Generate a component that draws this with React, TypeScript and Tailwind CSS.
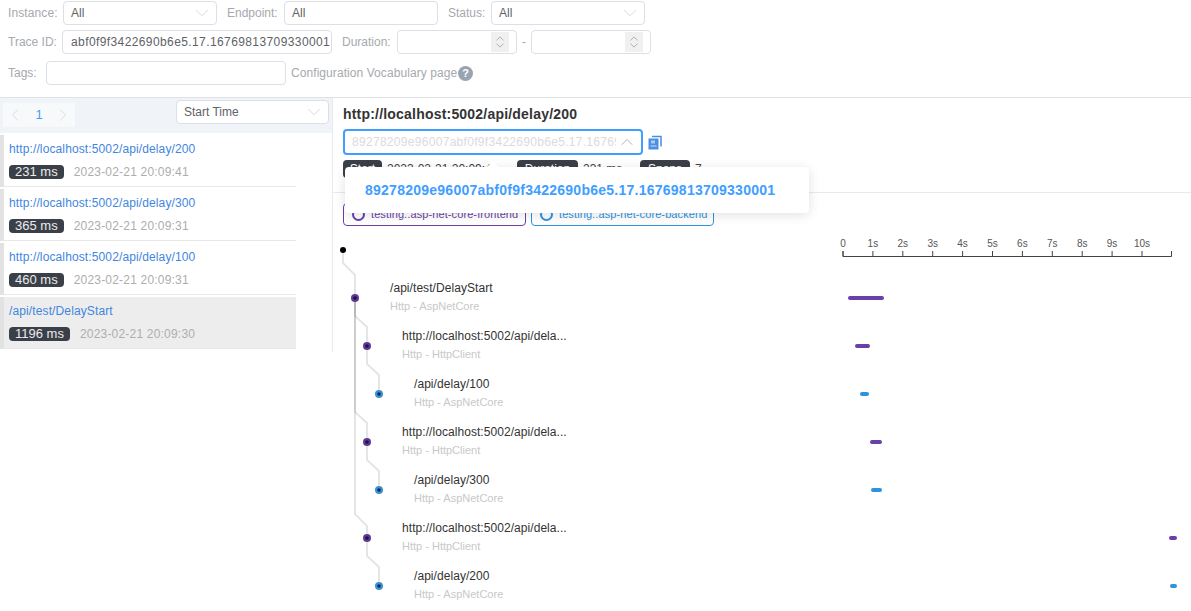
import { ChevronDown, ChevronLeft, ChevronRight, ChevronUp } from 'lucide-react';

const traces = [
    { name: 'http://localhost:5002/api/delay/200', ms: '231 ms', time: '2023-02-21 20:09:41', active: false },
    { name: 'http://localhost:5002/api/delay/300', ms: '365 ms', time: '2023-02-21 20:09:31', active: false },
    { name: 'http://localhost:5002/api/delay/100', ms: '460 ms', time: '2023-02-21 20:09:31', active: false },
    { name: '/api/test/DelayStart', ms: '1196 ms', time: '2023-02-21 20:09:30', active: true },
];

const spans = [
    { label: '/api/test/DelayStart', sub: 'Http - AspNetCore', indent: 'pl-[57px]', bar: 'ml-[5px] w-[36px] bg-[#6b3fa8]' },
    { label: 'http://localhost:5002/api/dela...', sub: 'Http - HttpClient', indent: 'pl-[69px]', bar: 'ml-[12px] w-[15px] bg-[#6b3fa8]' },
    { label: '/api/delay/100', sub: 'Http - AspNetCore', indent: 'pl-[81px]', bar: 'ml-[17px] w-[9px] bg-[#2e93dd]' },
    { label: 'http://localhost:5002/api/dela...', sub: 'Http - HttpClient', indent: 'pl-[69px]', bar: 'ml-[27px] w-[12px] bg-[#6b3fa8]' },
    { label: '/api/delay/300', sub: 'Http - AspNetCore', indent: 'pl-[81px]', bar: 'ml-[28px] w-[11px] bg-[#2e93dd]' },
    { label: 'http://localhost:5002/api/dela...', sub: 'Http - HttpClient', indent: 'pl-[69px]', bar: 'ml-[326px] w-[8px] bg-[#6b3fa8]' },
    { label: '/api/delay/200', sub: 'Http - AspNetCore', indent: 'pl-[81px]', bar: 'ml-[327px] w-[7px] bg-[#2e93dd]' },
];

// every child link starts at its parent, so the shared trunk gets darker near the top
const links = [
    'M343 250V263L355 275V298',
    'M355 298V514L367 526V538',
    'M355 298V316L367 327V346',
    'M367 346V364L379 375V394',
    'M355 298V412L367 423V442',
    'M367 442V460L379 471V490',
    'M367 538V556L379 567V586',
];

const nodes = [
    { x: 355, y: 298, fill: '#5f3a92', core: '#1d1145' },
    { x: 367, y: 346, fill: '#5f3a92', core: '#1d1145' },
    { x: 379, y: 394, fill: '#3a93cf', core: '#0a2a5e' },
    { x: 367, y: 442, fill: '#5f3a92', core: '#1d1145' },
    { x: 379, y: 490, fill: '#3a93cf', core: '#0a2a5e' },
    { x: 367, y: 538, fill: '#5f3a92', core: '#1d1145' },
    { x: 379, y: 586, fill: '#3a93cf', core: '#0a2a5e' },
];

const seconds = [0, 1, 2, 3, 4, 5, 6, 7, 8, 9, 10];

function FilterSelect({ value, className }: { value: string; className: string }) {
    return (
        <div className={`flex items-center justify-between h-6 pl-[7px] pr-[3px] bg-white border border-[#dcdfe6] rounded text-xs text-[#606266] ${className}`}>
            <span>{value}</span>
            <ChevronDown size={22} strokeWidth={0.8} className="text-[#c8ccd2]" />
        </div>
    );
}

function NumberInput() {
    return (
        <div className="flex items-center justify-end w-[120px] h-6 pr-[7px] bg-white border border-[#dcdfe6] rounded">
            <div className="flex flex-col items-center justify-center w-[18px] h-5 bg-[#f0f0f0]">
                <ChevronUp size={14} strokeWidth={1.2} className="text-[#8c8c8c] -mb-[3px]" />
                <ChevronDown size={14} strokeWidth={1.2} className="text-[#8c8c8c] -mt-[3px]" />
            </div>
        </div>
    );
}

function Filters() {
    const label = 'text-xs text-[#a6a9ad] shrink-0';
    return (
        <div className="h-[98px] pt-px pl-2 border-b border-[#dfe2e6]">
            <div className="flex items-center h-6">
                <span className={`${label} w-[55px] tracking-[0.1px]`}>Instance:</span>
                <FilterSelect value="All" className="w-[154px]" />
                <span className={`${label} ml-2.5 w-[57px]`}>Endpoint:</span>
                <div className="flex items-center w-[154px] h-6 pl-[7px] border border-[#dcdfe6] rounded text-xs text-[#606266]">All</div>
                <span className={`${label} ml-2.5 w-[43px]`}>Status:</span>
                <FilterSelect value="All" className="w-[154px]" />
            </div>
            <div className="flex items-center h-6 mt-[5px]">
                <span className={`${label} w-[54px]`}>Trace ID:</span>
                <div className="flex items-center w-[270px] h-6 pl-2 border border-[#dcdfe6] rounded text-xs tracking-[0.4px] text-[#606266] whitespace-nowrap">abf0f9f3422690b6e5.17.16769813709330001</div>
                <span className={`${label} ml-2.5 w-[55px]`}>Duration:</span>
                <NumberInput />
                <span className="w-[14px] text-center text-xs text-[#a6a9ad]">-</span>
                <NumberInput />
            </div>
            <div className="flex items-center h-6 mt-[7px]">
                <span className={`${label} w-[38px]`}>Tags:</span>
                <div className="w-[240px] h-6 border border-[#dcdfe6] rounded" />
                <span className={`${label} ml-[5px] tracking-[0.07px]`}>Configuration Vocabulary page</span>
                <span className="flex items-center justify-center w-[15px] h-[15px] ml-px rounded-full bg-[#9aa3b2] text-white text-[11px] font-bold">?</span>
            </div>
        </div>
    );
}

function TraceList() {
    return (
        <div className="w-[333px] h-[254px] shrink-0 border-r border-[#e8eaee]">
            <div className="flex items-start h-[35px] bg-[#f0f3f8]">
                <div className="flex items-center justify-between w-[72px] h-6 mt-[5px] ml-[3px] px-[2px] bg-[#f8f9fb] text-[13px] text-[#409eff]">
                    <ChevronLeft size={20} strokeWidth={0.8} className="text-[#c8ccd2]" />
                    <span>1</span>
                    <ChevronRight size={20} strokeWidth={0.8} className="text-[#c8ccd2]" />
                </div>
                <FilterSelect value="Start Time" className="w-[153px] ml-auto mr-[3px] mt-0.5" />
            </div>
            {traces.map((t) => (
                <div
                    key={t.name}
                    className={`w-[296px] h-[52px] mt-0.5 pt-1 pl-[5px] border-l-4 border-l-[#e2e2e2] border-b border-b-[#e8e8e8] ${t.active ? 'bg-[#ededed]' : 'bg-white'}`}
                >
                    <div className="h-5 leading-5 text-xs tracking-[0.12px] text-[#3f86e0]">{t.name}</div>
                    <div className="flex items-center h-3.5 mt-1.5 text-xs">
                        <span className="px-1.5 leading-[14px] rounded bg-[#3a3f48] text-white/90 text-[13px]">{t.ms}</span>
                        <span className="ml-2.5 tracking-[0.2px] text-[#adadad]">{t.time}</span>
                    </div>
                </div>
            ))}
        </div>
    );
}

function TraceGraph() {
    return (
        <div className="relative pt-12 -ml-2.5">
            <svg className="absolute left-0 top-0" width="858" height="385" viewBox="333 226 858 385" fill="none">
                {links.map((d) => (
                    <path key={d} d={d} stroke="#000" strokeOpacity="0.1" strokeWidth="2" />
                ))}
                <circle cx="343" cy="250" r="3" fill="#000" />
                {nodes.map((n) => (
                    <g key={`${n.x}-${n.y}`}>
                        <circle cx={n.x} cy={n.y} r="4" fill={n.fill} />
                        <circle cx={n.x} cy={n.y} r="1.8" fill={n.core} />
                    </g>
                ))}
                <path d="M843 251V256.5H1171.5V251" stroke="#444" />
                {seconds.map((s) => (
                    <g key={s}>
                        <path d={`M${843 + s * 29.9} 251V256.5`} stroke="#444" />
                        <text x={843 + s * 29.9} y="247" textAnchor="middle" fontSize="10" fill="#555">{s === 0 ? '0' : `${s}s`}</text>
                    </g>
                ))}
            </svg>
            {spans.map((s, i) => (
                <div key={i} className="relative flex items-center h-12">
                    <div className={`w-[510px] shrink-0 ${s.indent}`}>
                        <div className="h-5 -mt-1 leading-5 text-xs tracking-[0.06px] text-[#333]">{s.label}</div>
                        <div className="h-4 leading-4 text-[11px] text-[#c8c8c8]">{s.sub}</div>
                    </div>
                    <div className={`h-1 rounded-full ${s.bar}`} />
                </div>
            ))}
        </div>
    );
}

function TraceDetail() {
    const tag = 'h-[18px] leading-[18px] rounded bg-[#3a3f48] text-white text-xs text-center';
    return (
        <div className="relative flex-1 min-w-0 pl-2.5">
            <h2 className="h-[31px] leading-8 text-sm font-bold tracking-[0.2px] text-[#333]">http://localhost:5002/api/delay/200</h2>
            <div className="flex items-center">
                <div className="flex items-center justify-between w-[300px] h-[26px] pl-[7px] pr-1 border-2 border-[#409eff] rounded">
                    <span className="w-[264px] overflow-hidden whitespace-nowrap text-xs tracking-[0.3px] text-[#d9dbe0]">89278209e96007abf0f9f3422690b6e5.17.16769813709330001</span>
                    <ChevronUp size={20} strokeWidth={0.9} className="text-[#9a9a9a]" />
                </div>
                <svg className="ml-[5px]" width="14" height="15" viewBox="0 0 14 15" fill="none">
                    <path d="M4 1.5H13V11.5" stroke="#4a8fe0" strokeWidth="1.5" />
                    <path d="M0.5 3.5H10.5V14.5H0.5Z" fill="#4a8fe0" />
                    <path d="M3 5.5H7V8.5H3Z" fill="#a9ccf5" />
                    <path d="M2.5 11H8.5" stroke="#cfe2fa" />
                </svg>
            </div>
            <div className="flex items-center h-[18px] mt-[5px] text-xs text-[#444]">
                <span className={`${tag} w-[39px]`}>Start</span>
                <span className="ml-[5px] w-[130px]">2023-02-21 20:09:41</span>
                <span className={`${tag} w-[61px]`}>Duration</span>
                <span className="ml-[5px] w-[57px]">231 ms</span>
                <span className={`${tag} w-[50px]`}>Spans</span>
                <span className="ml-[5px]">7</span>
            </div>
            <div className="h-[15px] -ml-2.5 border-b border-[#e8eaee]" />
            <div className="flex items-center gap-[5px] mt-[10px] text-[11px] tracking-[0.1px] whitespace-nowrap">
                <div className="flex items-center w-[183px] h-[23px] pl-2 border border-[#6b3fa8] rounded-sm text-[#6b3fa8]">
                    <span className="w-[13px] h-[13px] mr-1.5 rounded-full border-2 border-[#6b3fa8] shrink-0" />
                    testing..asp-net-core-frontend
                </div>
                <div className="flex items-center w-[183px] h-[23px] pl-2 border border-[#2e93dd] rounded-sm text-[#2e93dd]">
                    <span className="w-[13px] h-[13px] mr-1.5 rounded-full border-2 border-[#2e93dd] shrink-0" />
                    testing..asp-net-core-backend
                </div>
            </div>
            <TraceGraph />
            {/* open trace id dropdown */}
            <div className="absolute left-3 top-[69px] flex items-center w-[464px] h-[46px] pl-5 bg-white rounded-sm shadow-[0_2px_12px_rgba(0,0,0,0.12)] text-sm font-bold tracking-[0.25px] text-[#409eff] whitespace-nowrap">
                <span className="absolute left-[143px] -top-1 w-2.5 h-2.5 rotate-45 bg-white" />
                89278209e96007abf0f9f3422690b6e5.17.16769813709330001
            </div>
        </div>
    );
}

export default function App() {
    return (
        <div className="h-[611px] overflow-hidden bg-white font-['Liberation_Sans',Arial,sans-serif]">
            <Filters />
            <div className="flex">
                <TraceList />
                <TraceDetail />
            </div>
        </div>
    );
}
